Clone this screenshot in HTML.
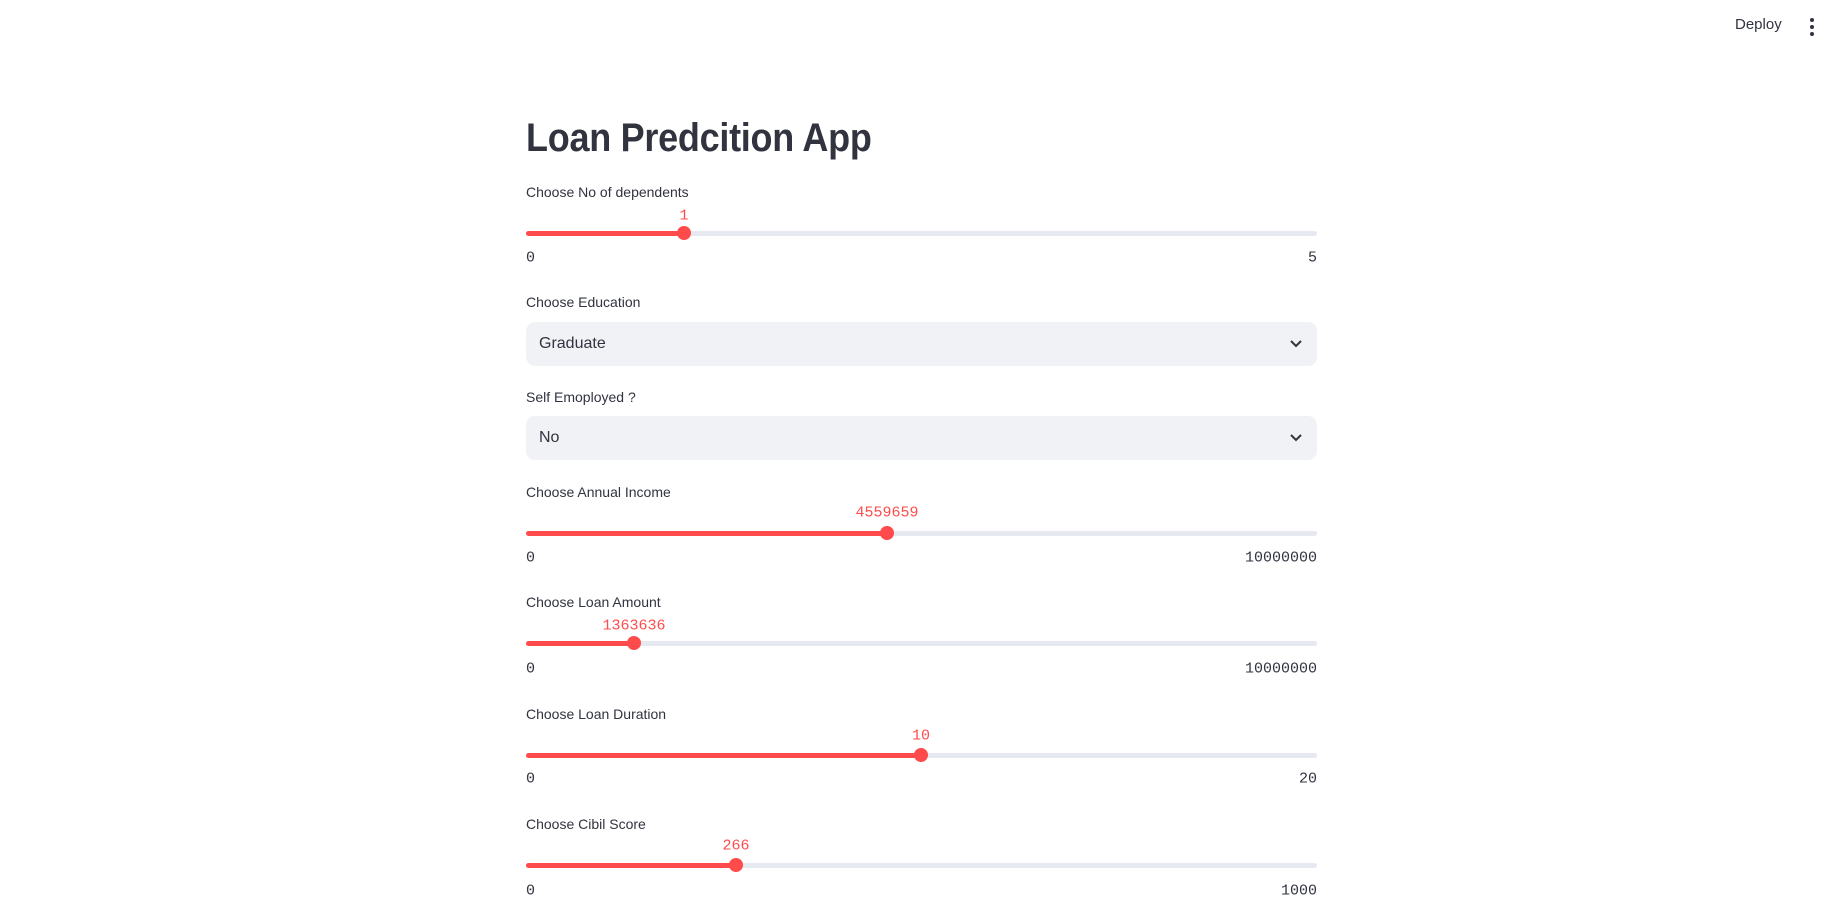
<!DOCTYPE html>
<html><head><style>
body{margin:0;width:1838px;height:907px;background:#fff;font-family:"Liberation Sans",sans-serif;color:#31333f;position:relative;overflow:hidden}
.a{position:absolute}
.lbl{font-size:14px;left:526px;transform:translateY(-50%)}
.track{left:526px;width:791px;height:5px;background:#e6e9ef;border-radius:3px}
.fill{left:0;top:0;height:5px;background:#ff4b4b;border-radius:3px}
.thumb{width:14px;height:14px;border-radius:50%;background:#ff4b4b;transform:translate(-50%,-50%)}
.val{font-family:"Liberation Mono",monospace;font-size:15px;color:#ff4b4b;transform:translate(-50%,-50%)}
.mm{font-family:"Liberation Mono",monospace;font-size:15px;transform:translateY(-50%)}
.sel{left:526px;width:791px;background:#f0f2f6;border-radius:9px}
.sel span{position:absolute;left:13px;top:50%;transform:translateY(-50%);font-size:16px}
.sel svg{position:absolute;right:14px;top:50%;transform:translateY(-50%)}
</style></head><body>
<div class="a" style="left:1735px;top:16px;font-size:15px">Deploy</div>
<svg class="a" style="left:1807px;top:17px" width="10" height="20"><circle cx="5" cy="3" r="2" fill="#31333f"/><circle cx="5" cy="10" r="2" fill="#31333f"/><circle cx="5" cy="17" r="2" fill="#31333f"/></svg>
<div class="a" style="left:526px;top:116px;font-size:40px;font-weight:bold;transform-origin:left;transform:scaleX(0.9);letter-spacing:-0.3px">Loan Predcition App</div>

<div class="a lbl" style="top:192px">Choose No of dependents</div>
<div class="a val" style="left:684px;top:216px">1</div>
<div class="a track" style="top:231px"><div class="a fill" style="width:158px"></div></div>
<div class="a thumb" style="left:684px;top:233px"></div>
<div class="a mm" style="left:526px;top:258px">0</div>
<div class="a mm" style="right:521px;top:258px">5</div>

<div class="a lbl" style="top:302px">Choose Education</div>
<div class="a sel" style="top:322px;height:44px"><span>Graduate</span><svg width="14" height="10"><path d="M2 2l5 5 5-5" stroke="#31333f" stroke-width="2" fill="none"/></svg></div>
<div class="a lbl" style="top:397px">Self Emoployed ?</div>
<div class="a sel" style="top:416px;height:44px"><span>No</span><svg width="14" height="10"><path d="M2 2l5 5 5-5" stroke="#31333f" stroke-width="2" fill="none"/></svg></div>

<div class="a lbl" style="top:492px">Choose Annual Income</div>
<div class="a val" style="left:887px;top:513px">4559659</div>
<div class="a track" style="top:531px"><div class="a fill" style="width:361px"></div></div>
<div class="a thumb" style="left:887px;top:533px"></div>
<div class="a mm" style="left:526px;top:558px">0</div>
<div class="a mm" style="right:521px;top:558px">10000000</div>

<div class="a lbl" style="top:602px">Choose Loan Amount</div>
<div class="a val" style="left:634px;top:626px">1363636</div>
<div class="a track" style="top:641px"><div class="a fill" style="width:108px"></div></div>
<div class="a thumb" style="left:634px;top:643px"></div>
<div class="a mm" style="left:526px;top:669px">0</div>
<div class="a mm" style="right:521px;top:669px">10000000</div>

<div class="a lbl" style="top:714px">Choose Loan Duration</div>
<div class="a val" style="left:921px;top:736px">10</div>
<div class="a track" style="top:753px"><div class="a fill" style="width:395px"></div></div>
<div class="a thumb" style="left:921px;top:755px"></div>
<div class="a mm" style="left:526px;top:779px">0</div>
<div class="a mm" style="right:521px;top:779px">20</div>

<div class="a lbl" style="top:824px">Choose Cibil Score</div>
<div class="a val" style="left:736px;top:846px">266</div>
<div class="a track" style="top:863px"><div class="a fill" style="width:210px"></div></div>
<div class="a thumb" style="left:736px;top:865px"></div>
<div class="a mm" style="left:526px;top:891px">0</div>
<div class="a mm" style="right:521px;top:891px">1000</div>
</body></html>
